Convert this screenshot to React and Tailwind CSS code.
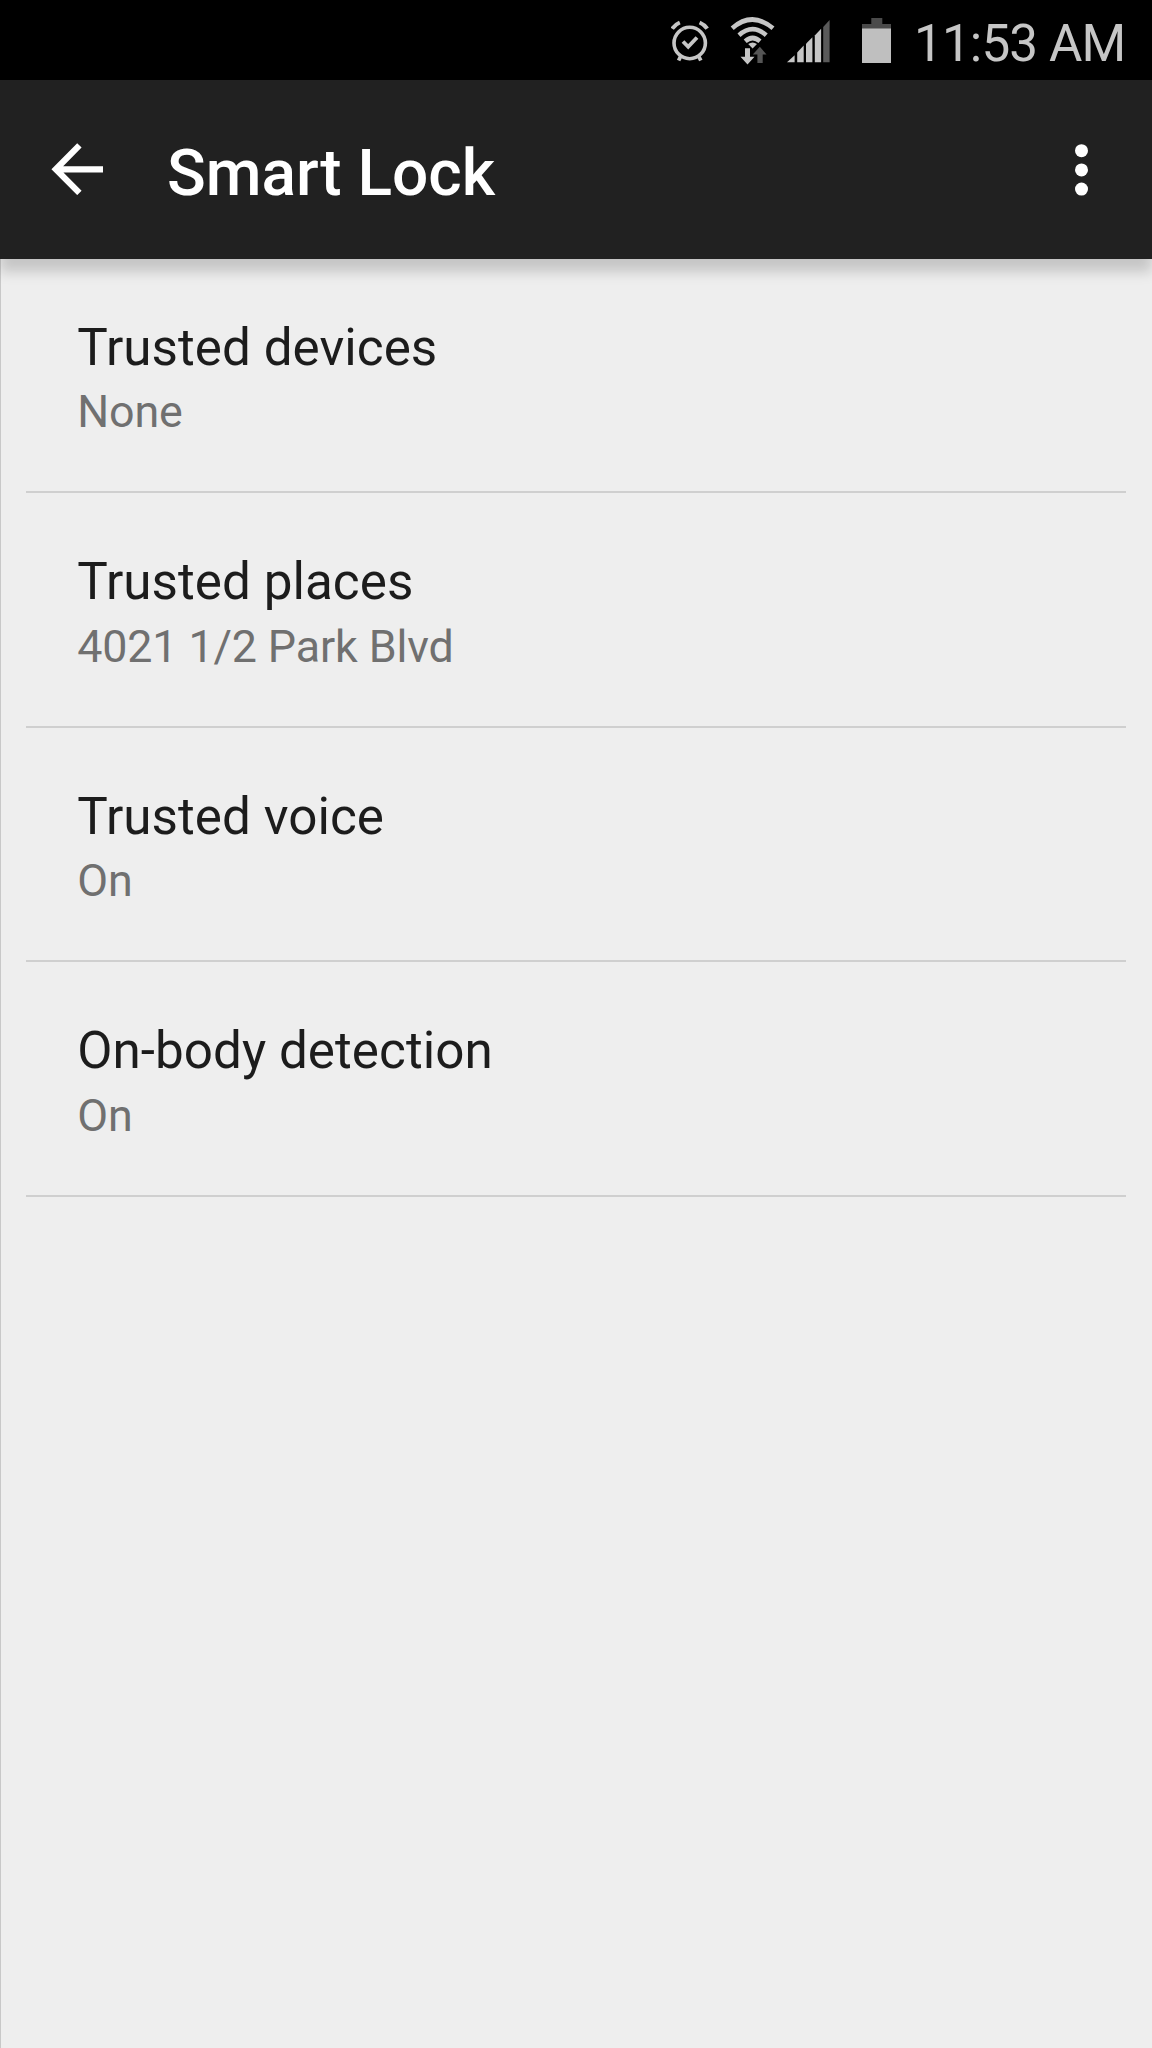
import React from 'react';

const settings = [
  { title: 'Trusted devices', summary: 'None' },
  { title: 'Trusted places', summary: '4021 1/2 Park Blvd' },
  { title: 'Trusted voice', summary: 'On' },
  { title: 'On-body detection', summary: 'On' },
];

const AlarmIcon = () => (
  <svg width="38" height="44" viewBox="0 0 38 44" fill="none" stroke="#c6c6c6">
    <circle cx="18.7" cy="25" r="15.7" strokeWidth="3.6" />
    <path d="M12 23.5l5.2 5.3 8.8-9.3" strokeWidth="3.8" />
    <path d="M1.2 10.7q2.8-4.2 7.6-6.2M36.2 10.7q-2.8-4.2-7.6-6.2" strokeWidth="4" />
    <path d="M9.6 38.5l-2 4M27.8 38.5l2 4" strokeWidth="3.8" />
  </svg>
);

const WifiIcon = () => (
  <svg width="46" height="48" viewBox="0 0 46 48" fill="none">
    <g stroke="#c6c6c6" strokeWidth="4.6">
      <path d="M2.2 11.2q19.8-17.4 40.8 0" />
      <path d="M9 18.2q13.6-12 27.2 0" />
      <path d="M15.2 24.2q7.4-6.4 14.8 0" />
    </g>
    <path d="M18.2 27q4.4-3.2 8.8 0l-4.4 4.4z" fill="#c6c6c6" />
    <path d="M15 31.3h5v8.5h4.5L17.5 47.5l-7-7.7H15z" fill="#c6c6c6" />
    <path d="M27.4 46v-8.6h-4.6l7-7.6 6.7 7.6h-3.8V46z" fill="#555555" />
  </svg>
);

const SignalIcon = () => (
  <svg width="44" height="43" viewBox="0 0 44 43" fill="#c6c6c6">
    <path d="M0 42.2l7.6-7v7z" />
    <path d="M10.2 42.2v-9.6l6.5-7v16.6z" />
    <path d="M19 42.2V23.8l6.4-6.6v25z" />
    <path d="M27.8 42.2V15.5l6.3-6.8v33.5z" />
    <path d="M36.2 42.2V7l6.4-7v42.2z" fill="#5a5a5a" />
  </svg>
);

const BatteryIcon = () => (
  <svg width="30" height="45" viewBox="0 0 30 45">
    <path d="M9.3 0h11v6H29v5H0V6h9.3z" fill="#4a4a4a" />
    <path d="M0 10.5h29V45H0z" fill="#bfbfbf" />
  </svg>
);

const StatusBar = () => (
  <div className="h-20 bg-black flex items-start justify-end pr-[27px] text-[#c6c6c6]">
    <div className="mt-[18px] mr-[21px]"><AlarmIcon /></div>
    <div className="mt-[17px] mr-[11px]"><WifiIcon /></div>
    <div className="mt-[20px] mr-[31px]"><SignalIcon /></div>
    <div className="mt-[18px] mr-[22px]"><BatteryIcon /></div>
    <span className="w-[211px] mt-[14px] text-[51.2px] leading-[60px] tracking-[-0.85px] font-normal whitespace-nowrap">11:53 AM</span>
  </div>
);

const AppBar = () => (
  <header className="relative h-[179px] bg-[#212121] flex items-center text-white shadow-[0_13px_12px_rgba(0,0,0,0.17)]">
    <button className="ml-[51px] -mt-px" aria-label="Back">
      <svg width="52" height="52" viewBox="0 0 52 52" fill="none" stroke="white" strokeWidth="6.2">
        <path d="M52 26.3H5M28.4 2.4L4.8 26.2l23.6 23.7" />
      </svg>
    </button>
    <h1 className="ml-[64px] mt-[7px] text-[64px] leading-[75px] font-medium">Smart Lock</h1>
    <button className="ml-auto mr-[64px]" aria-label="More options">
      <svg width="13" height="52" viewBox="0 0 13 52" fill="white">
        <circle cx="6.5" cy="6.7" r="6.5" />
        <circle cx="6.5" cy="25.9" r="6.5" />
        <circle cx="6.5" cy="45.1" r="6.5" />
      </svg>
    </button>
  </header>
);

const SettingRow = ({ title, summary }) => (
  <li className="h-[234.4px] pt-[59px] pl-[51.2px] border-b-2 border-[#cfcfcf]">
    <h2 className="text-[51.2px] leading-[60px] tracking-[0.05px] text-[#1c1c1c]">{title}</h2>
    <p className="mt-[7.4px] text-[44.8px] leading-[53px] tracking-[-0.12px] text-[#707070]">{summary}</p>
  </li>
);

export default function App() {
  return (
    <div className="w-[1152px] h-[2048px] flex flex-col overflow-hidden bg-[#eeeeee] font-['Roboto',sans-serif]">
      <StatusBar />
      <AppBar />
      <main className="flex-1 border-l border-[#c8c8c8]">
        <ul className="ml-[25px] mr-[26px]">
          {settings.map((item) => (
            <SettingRow key={item.title} title={item.title} summary={item.summary} />
          ))}
        </ul>
      </main>
    </div>
  );
}
